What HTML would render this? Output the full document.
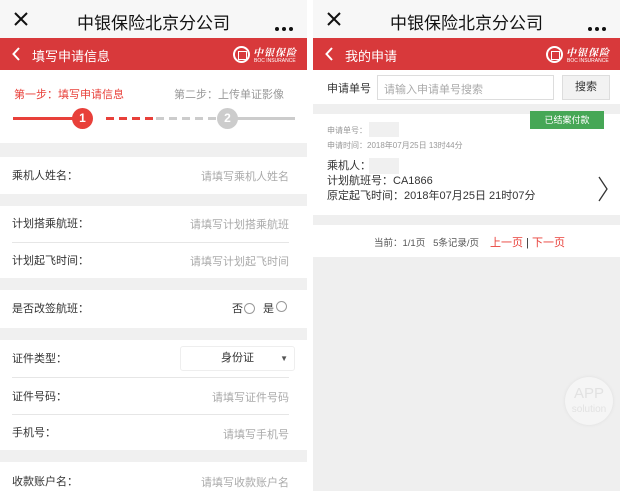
<!DOCTYPE html>
<html><head><meta charset="utf-8"><style>
*{margin:0;padding:0;box-sizing:border-box}
body{width:620px;height:491px;overflow:hidden;background:#fff;font-family:"Liberation Sans","Noto Sans CJK SC",sans-serif;position:relative}
.a{position:absolute}
.p{position:absolute;top:0;height:491px;overflow:hidden}
.top{position:absolute;left:0;top:0;width:100%;height:38px;background:#f7f7f7}
.top .t{position:absolute;left:0;right:0;top:9px;text-align:center;font-size:17px;color:#111}
.top .x{position:absolute;left:14px;top:12px}
.top .d{position:absolute;right:14px;top:18px}
.top .d i{display:inline-block;width:4px;height:4px;border-radius:50%;background:#111;margin-left:3px}
.red{position:absolute;left:0;top:38px;width:100%;height:32px;background:#d8393b;color:#fff}
.red .b{position:absolute;left:12px;top:9px}
.red .h{position:absolute;left:32px;top:8px;font-size:13px}
.logo{position:absolute;right:12px;top:6px;width:62px;height:22px;white-space:nowrap}
.logo .c{position:absolute;left:0;top:2px;width:17px;height:17px;border:2px solid #fff;border-radius:50%}
.logo .c:after{content:"";position:absolute;left:3px;top:3px;width:7px;height:7px;border:1.5px solid #fff}
.logo .n{position:absolute;left:20px;top:0px;font-size:10px;font-family:"Noto Serif CJK SC",serif;font-style:italic;font-weight:bold;letter-spacing:1px}
.logo .s{position:absolute;left:21px;top:14px;font-size:5px}
.g{position:absolute;left:0;width:100%;background:#f0f0f0}
.lb{position:absolute;left:12px;font-size:11px;color:#333}
.ph{position:absolute;right:18px;font-size:11px;color:#aaa}
.ln{position:absolute;left:12px;right:18px;height:1px;background:#e6e6e6}
</style></head><body>
<div class="p" style="left:0;width:307px">
<div class="top"><svg class="x" width="14" height="14" viewBox="0 0 14 14"><path d="M1 1L13 13M13 1L1 13" stroke="#111" stroke-width="2"/></svg><div class="t">中银保险北京分公司</div><span class="d"><i></i><i></i><i></i></span></div>
<div class="red"><svg class="b" width="8" height="14" viewBox="0 0 8 14"><path d="M7 1L1.5 7L7 13" stroke="#fff" stroke-width="2" fill="none"/></svg><span class="h">填写申请信息</span>
<div class="logo"><div class="c"></div><span class="n">中银保险</span><span class="s">BOC INSURANCE</span></div></div>
<div class="a" style="left:14px;top:86px;font-size:11px;color:#e8403a">第一步：填写申请信息</div>
<div class="a" style="left:174px;top:86px;font-size:11px;color:#999">第二步：上传单证影像</div>
<div class="a" style="left:13px;top:117px;width:70px;height:3px;background:#e8403a"></div>
<div class="a" style="left:106px;top:117px;width:50px;height:3px;background:repeating-linear-gradient(90deg,#e8403a 0 8px,transparent 8px 13px)"></div>
<div class="a" style="left:156px;top:117px;width:60px;height:3px;background:repeating-linear-gradient(90deg,#ccc 0 8px,transparent 8px 13px)"></div>
<div class="a" style="left:236px;top:117px;width:59px;height:3px;background:#ccc"></div>
<div class="a" style="left:72px;top:108px;width:21px;height:21px;border-radius:50%;background:#e8403a;color:#fff;font-size:12px;text-align:center;line-height:21px;font-weight:bold">1</div>
<div class="a" style="left:217px;top:108px;width:21px;height:21px;border-radius:50%;background:#ccc;color:#fff;font-size:12px;text-align:center;line-height:21px;font-weight:bold">2</div>
<div class="g" style="top:143px;height:14px"></div>
<div class="lb" style="top:167px">乘机人姓名：</div><div class="ph" style="top:168px">请填写乘机人姓名</div>
<div class="g" style="top:194px;height:12px"></div>
<div class="lb" style="top:215px">计划搭乘航班：</div><div class="ph" style="top:216px">请填写计划搭乘航班</div>
<div class="ln" style="top:242px"></div>
<div class="lb" style="top:252px">计划起飞时间：</div><div class="ph" style="top:253px">请填写计划起飞时间</div>
<div class="g" style="top:278px;height:12px"></div>
<div class="lb" style="top:300px">是否改签航班：</div>
<div class="a" style="left:232px;top:300px;font-size:11px;color:#333">否</div>
<div class="a" style="left:244px;top:303px;width:11px;height:11px;border:1px solid #999;border-radius:50%"></div>
<div class="a" style="left:263px;top:300px;font-size:11px;color:#333">是</div>
<div class="a" style="left:276px;top:301px;width:11px;height:11px;border:1px solid #999;border-radius:50%"></div>
<div class="g" style="top:328px;height:12px"></div>
<div class="lb" style="top:350px">证件类型：</div>
<div class="a" style="left:180px;top:346px;width:115px;height:25px;border:1px solid #eee;border-radius:3px;font-size:11px;color:#333;text-align:center;line-height:23px">身份证<span style="position:absolute;right:6px;top:0;font-size:8px;color:#555">▼</span></div>
<div class="ln" style="top:377px"></div>
<div class="lb" style="top:388px">证件号码：</div><div class="ph" style="top:389px">请填写证件号码</div>
<div class="ln" style="top:414px"></div>
<div class="lb" style="top:424px">手机号：</div><div class="ph" style="top:426px">请填写手机号</div>
<div class="g" style="top:450px;height:12px"></div>
<div class="lb" style="top:473px">收款账户名：</div><div class="ph" style="top:474px">请填写收款账户名</div>
</div>
<div class="p" style="left:313px;width:307px;background:#efefef">
<div class="top"><svg class="x" width="14" height="14" viewBox="0 0 14 14"><path d="M1 1L13 13M13 1L1 13" stroke="#111" stroke-width="2"/></svg><div class="t">中银保险北京分公司</div><span class="d"><i></i><i></i><i></i></span></div>
<div class="red"><svg class="b" width="8" height="14" viewBox="0 0 8 14"><path d="M7 1L1.5 7L7 13" stroke="#fff" stroke-width="2" fill="none"/></svg><span class="h">我的申请</span>
<div class="logo"><div class="c"></div><span class="n">中银保险</span><span class="s">BOC INSURANCE</span></div></div>
<div class="a" style="left:0;top:70px;width:307px;height:34px;background:#fff"></div>
<div class="a" style="left:14px;top:80px;font-size:11px;color:#333">申请单号</div>
<div class="a" style="left:64px;top:75px;width:177px;height:25px;border:1px solid #ddd;font-size:11px;color:#aaa;padding:5px 6px">请输入申请单号搜索</div>
<div class="a" style="left:249px;top:75px;width:48px;height:25px;border:1px solid #ddd;background:#f2f2f2;font-size:11px;color:#333;text-align:center;line-height:23px">搜索</div>
<div class="a" style="left:0;top:114px;width:307px;height:101px;background:#fff"></div>
<div class="a" style="left:217px;top:111px;width:74px;height:18px;background:#46a756;color:#fff;font-size:9px;text-align:center;line-height:18px">已结案付款</div>
<div class="a" style="left:14px;top:125px;font-size:8px;color:#999">申请单号：</div>
<div class="a" style="left:56px;top:122px;width:30px;height:15px;background:#f0f0f0"></div>
<div class="a" style="left:14px;top:140px;font-size:8px;color:#999">申请时间：2018年07月25日 13时44分</div>
<div class="a" style="left:14px;top:159px;font-size:11px;color:#333;line-height:15px">乘机人：<br>计划航班号：CA1866<br>原定起飞时间：2018年07月25日 21时07分</div>
<div class="a" style="left:56px;top:158px;width:30px;height:16px;background:#f0f0f0"></div>
<svg class="a" style="left:285px;top:176px" width="10" height="26" viewBox="0 0 10 26"><path d="M1 1L9 13L1 25" stroke="#333" stroke-width="1.3" fill="none"/></svg>
<div class="a" style="left:0;top:225px;width:307px;height:32px;background:#fff"></div>
<div class="a" style="left:61px;top:235px;font-size:9.5px;color:#555">当前：1/1页&nbsp;&nbsp;&nbsp;5条记录/页</div>
<div class="a" style="left:177px;top:234px;font-size:11px;color:#e8403a">上一页 <span style="color:#333">|</span> 下一页</div>
<div class="a" style="left:252px;top:377px;width:48px;height:48px;border-radius:50%;background:#f5f5f5;box-shadow:0 0 3px #ddd;color:#e2e2e2;text-align:center;font-size:15px;line-height:14px;padding-top:10px">APP<br><span style="font-size:10px">solution</span></div>
</div>
</body></html>
